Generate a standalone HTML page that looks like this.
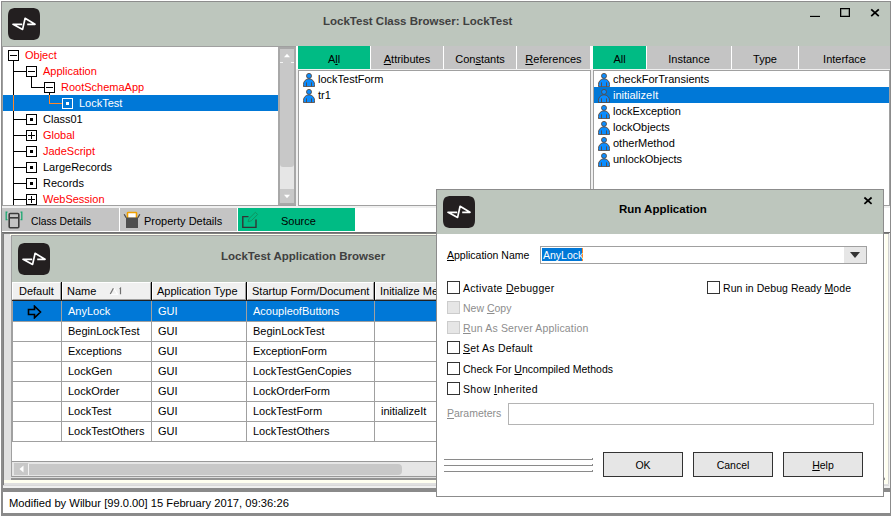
<!DOCTYPE html><html><head><meta charset="utf-8"><style>
html,body{margin:0;padding:0;}
body{width:892px;height:517px;overflow:hidden;background:#fff;position:relative;font-family:"Liberation Sans",sans-serif;font-size:11px;color:#000;}
body div{position:absolute;box-sizing:border-box;}
.t{white-space:pre;}
svg{display:block;}
u{text-decoration:underline;text-underline-offset:1px;text-decoration-thickness:1px;}
</style></head><body>
<div style="left:1px;top:1px;width:890px;height:515px;border:1px solid #8c8c8c;border-left:2px solid #8c8c8c;background:#f0f0f0"></div>
<div style="left:2px;top:2px;width:888px;height:44px;background:#bdc6bd"></div>
<div style="left:8px;top:8px;width:32px;height:32px"><svg width="32" height="32" viewBox="0 0 32 32"><path d="M8.5 0 H23.5 C30 0 32 2 32 8.5 V23.5 C32 30 30 32 23.5 32 H8.5 C2 32 0 30 0 23.5 V8.5 C0 2 2 0 8.5 0Z" fill="#231f20"/><path d="M14.2 16.3 H5 L14.6 21.4 L17.1 10.3 L27 16.3 H19.2" fill="none" stroke="#fff" stroke-width="1.7" stroke-linejoin="round"/></svg></div>
<div class="t" style="left:323px;top:12px;height:18px;line-height:18px;font-weight:bold;font-size:11.5px;color:#404040">LockTest Class Browser: LockTest</div>
<div style="left:810px;top:16px;width:10px;height:1px;background:#000"></div>
<div style="left:810px;top:15px;width:10px;height:1px;background:rgba(0,0,0,0.15)"></div>
<div style="left:840px;top:8px;width:10px;height:9px;border:1px solid #000;box-shadow:inset 0 0 0 0.6px rgba(0,0,0,0.5)"></div>
<div style="left:870px;top:8px;width:10px;height:10px"><svg width="10" height="10" viewBox="0 0 10 10"><path d="M1.2 1.4 L8.8 8.2 M8.8 1.4 L1.2 8.2" stroke="#000" stroke-width="1.8"/></svg></div>
<div style="left:2px;top:46px;width:294px;height:160px;background:#fff;border:1px solid #a0a0a0"></div>
<div style="left:278px;top:47px;width:18px;height:158px;background:#e6e6e6;border:2px solid #a8a8a8;border-left-width:2px"></div>
<div style="left:280px;top:49px;width:14px;height:13px;background:#c8c8c8"></div>
<div style="left:283px;top:53px;width:8px;height:5px"><svg width="8" height="5"><path d="M1 4.2 L4 0.8 L7 4.2Z" fill="#fff"/></svg></div>
<div style="left:280px;top:62px;width:14px;height:105px;background:#c8c8c8;border-radius:0 0 3px 3px"></div>
<div style="left:280px;top:62px;width:3px;height:1px;background:#f4f4f4"></div>
<div style="left:291px;top:62px;width:3px;height:1px;background:#f4f4f4"></div>
<div style="left:280px;top:189px;width:14px;height:14px;background:#c8c8c8"></div>
<div style="left:283px;top:194px;width:8px;height:5px"><svg width="8" height="5"><path d="M1 0.8 L4 4.2 L7 0.8Z" fill="#fff"/></svg></div>
<div style="left:3px;top:47px;width:275px;height:158px;overflow:hidden">
<div style="left:0px;top:48px;width:275px;height:16px;background:#0078d7"></div>
<div style="left:10px;top:14px;width:1px;height:34px;background:#000"></div>
<div style="left:10px;top:48px;width:1px;height:16px;background:#ff8728"></div>
<div style="left:10px;top:64px;width:1px;height:94px;background:#000"></div>
<div style="left:28px;top:30px;width:1px;height:10px;background:#000"></div>
<div style="left:46px;top:46px;width:1px;height:2px;background:#000"></div>
<div style="left:46px;top:48px;width:1px;height:9px;background:#ff8728"></div>
<div style="left:5px;top:3px;width:11px;height:11px;border:1px solid #000;background:#fff"></div>
<div style="left:7px;top:8px;width:7px;height:1px;background:#000"></div>
<div class="t" style="left:22px;top:0px;height:16px;line-height:16px;color:#ff0000">Object</div>
<div style="left:10px;top:24px;width:13px;height:1px;background:#000"></div>
<div style="left:23px;top:19px;width:11px;height:11px;border:1px solid #000;background:#fff"></div>
<div style="left:25px;top:24px;width:7px;height:1px;background:#000"></div>
<div class="t" style="left:40px;top:16px;height:16px;line-height:16px;color:#ff0000">Application</div>
<div style="left:28px;top:40px;width:13px;height:1px;background:#000"></div>
<div style="left:41px;top:35px;width:11px;height:11px;border:1px solid #000;background:#fff"></div>
<div style="left:43px;top:40px;width:7px;height:1px;background:#000"></div>
<div class="t" style="left:58px;top:32px;height:16px;line-height:16px;color:#ff0000">RootSchemaApp</div>
<div style="left:46px;top:56px;width:13px;height:1px;background:#ff8728"></div>
<div style="left:59px;top:51px;width:11px;height:11px;border:1px solid #fff;background:#0078d7"></div>
<div style="left:63px;top:55px;width:3px;height:3px;background:#fff"></div>
<div class="t" style="left:76px;top:48px;height:16px;line-height:16px;color:#fff">LockTest</div>
<div style="left:10px;top:72px;width:13px;height:1px;background:#000"></div>
<div style="left:23px;top:67px;width:11px;height:11px;border:1px solid #000;background:#fff"></div>
<div style="left:27px;top:71px;width:3px;height:3px;background:#000"></div>
<div class="t" style="left:40px;top:64px;height:16px;line-height:16px;color:#000">Class01</div>
<div style="left:10px;top:88px;width:13px;height:1px;background:#000"></div>
<div style="left:23px;top:83px;width:11px;height:11px;border:1px solid #000;background:#fff"></div>
<div style="left:25px;top:88px;width:7px;height:1px;background:#000"></div>
<div style="left:28px;top:85px;width:1px;height:7px;background:#000"></div>
<div class="t" style="left:40px;top:80px;height:16px;line-height:16px;color:#ff0000">Global</div>
<div style="left:10px;top:104px;width:13px;height:1px;background:#000"></div>
<div style="left:23px;top:99px;width:11px;height:11px;border:1px solid #000;background:#fff"></div>
<div style="left:27px;top:103px;width:3px;height:3px;background:#000"></div>
<div class="t" style="left:40px;top:96px;height:16px;line-height:16px;color:#ff0000">JadeScript</div>
<div style="left:10px;top:120px;width:13px;height:1px;background:#000"></div>
<div style="left:23px;top:115px;width:11px;height:11px;border:1px solid #000;background:#fff"></div>
<div style="left:27px;top:119px;width:3px;height:3px;background:#000"></div>
<div class="t" style="left:40px;top:112px;height:16px;line-height:16px;color:#000">LargeRecords</div>
<div style="left:10px;top:136px;width:13px;height:1px;background:#000"></div>
<div style="left:23px;top:131px;width:11px;height:11px;border:1px solid #000;background:#fff"></div>
<div style="left:27px;top:135px;width:3px;height:3px;background:#000"></div>
<div class="t" style="left:40px;top:128px;height:16px;line-height:16px;color:#000">Records</div>
<div style="left:10px;top:152px;width:13px;height:1px;background:#000"></div>
<div style="left:23px;top:147px;width:11px;height:11px;border:1px solid #000;background:#fff"></div>
<div style="left:25px;top:152px;width:7px;height:1px;background:#000"></div>
<div style="left:28px;top:149px;width:1px;height:7px;background:#000"></div>
<div class="t" style="left:40px;top:144px;height:16px;line-height:16px;color:#ff0000">WebSession</div>
</div>
<div style="left:296px;top:46px;width:594px;height:23px;background:#fff"></div>
<div style="left:298px;top:46px;width:72px;height:23px;background:#00bb84"></div>
<div class="t" style="left:298px;top:48px;width:72px;height:23px;line-height:23px;text-align:center">A<u>l</u>l</div>
<div style="left:371px;top:46px;width:72px;height:23px;background:#c4c4c4"></div>
<div class="t" style="left:371px;top:48px;width:72px;height:23px;line-height:23px;text-align:center"><u>A</u>ttributes</div>
<div style="left:444px;top:46px;width:72px;height:23px;background:#c4c4c4"></div>
<div class="t" style="left:444px;top:48px;width:72px;height:23px;line-height:23px;text-align:center">Con<u>s</u>tants</div>
<div style="left:517px;top:46px;width:73px;height:23px;background:#c4c4c4"></div>
<div class="t" style="left:517px;top:48px;width:73px;height:23px;line-height:23px;text-align:center"><u>R</u>eferences</div>
<div style="left:298px;top:70px;width:293px;height:136px;background:#fff;border:1px solid #a0a0a0"></div>
<div style="left:303px;top:72px;width:12px;height:15px"><svg width="12" height="15" viewBox="0 0 12 15"><circle cx="6" cy="3.9" r="2.5" fill="#0a8cff" stroke="#5a4a40" stroke-width="0.9"/><path d="M0.45 14.6 V12.4 A5.55 5.6 0 0 1 11.55 12.4 V14.6 Z" fill="#0a8cff" stroke="#5a4a40" stroke-width="0.9"/><path d="M3.5 10.4 V14.6 M8.5 10.4 V14.6" stroke="#5a4a40" stroke-width="0.9"/></svg></div>
<div class="t" style="left:318px;top:71px;height:16px;line-height:16px;">lockTestForm</div>
<div style="left:303px;top:88px;width:12px;height:15px"><svg width="12" height="15" viewBox="0 0 12 15"><circle cx="6" cy="3.9" r="2.5" fill="#0a8cff" stroke="#5a4a40" stroke-width="0.9"/><path d="M0.45 14.6 V12.4 A5.55 5.6 0 0 1 11.55 12.4 V14.6 Z" fill="#0a8cff" stroke="#5a4a40" stroke-width="0.9"/><path d="M3.5 10.4 V14.6 M8.5 10.4 V14.6" stroke="#5a4a40" stroke-width="0.9"/></svg></div>
<div class="t" style="left:318px;top:87px;height:16px;line-height:16px;">tr1</div>
<div style="left:593px;top:46px;width:53px;height:23px;background:#00bb84"></div>
<div class="t" style="left:593px;top:48px;width:53px;height:23px;line-height:23px;text-align:center">All</div>
<div style="left:647px;top:46px;width:84px;height:23px;background:#c4c4c4"></div>
<div class="t" style="left:647px;top:48px;width:84px;height:23px;line-height:23px;text-align:center">Instance</div>
<div style="left:732px;top:46px;width:66px;height:23px;background:#c4c4c4"></div>
<div class="t" style="left:732px;top:48px;width:66px;height:23px;line-height:23px;text-align:center">Type</div>
<div style="left:799px;top:46px;width:91px;height:23px;background:#c4c4c4"></div>
<div class="t" style="left:799px;top:48px;width:91px;height:23px;line-height:23px;text-align:center">Interface</div>
<div style="left:593px;top:70px;width:297px;height:136px;background:#fff;border:1px solid #a0a0a0"></div>
<div style="left:594px;top:87px;width:295px;height:16px;background:#0078d7"></div>
<div style="left:598px;top:72px;width:12px;height:15px"><svg width="12" height="15" viewBox="0 0 12 15"><circle cx="6" cy="3.9" r="2.5" fill="#0a8cff" stroke="#5a4a40" stroke-width="0.9"/><path d="M0.45 14.6 V12.4 A5.55 5.6 0 0 1 11.55 12.4 V14.6 Z" fill="#0a8cff" stroke="#5a4a40" stroke-width="0.9"/><path d="M3.5 10.4 V14.6 M8.5 10.4 V14.6" stroke="#5a4a40" stroke-width="0.9"/></svg></div>
<div class="t" style="left:613px;top:71px;height:16px;line-height:16px;">checkForTransients</div>
<div style="left:598px;top:88px;width:12px;height:15px"><svg width="12" height="15" viewBox="0 0 12 15"><circle cx="6" cy="3.9" r="2.5" fill="#0a8cff" stroke="#5a4a40" stroke-width="0.9"/><path d="M0.45 14.6 V12.4 A5.55 5.6 0 0 1 11.55 12.4 V14.6 Z" fill="#0a8cff" stroke="#5a4a40" stroke-width="0.9"/><path d="M3.5 10.4 V14.6 M8.5 10.4 V14.6" stroke="#5a4a40" stroke-width="0.9"/></svg></div>
<div class="t" style="left:613px;top:87px;height:16px;line-height:16px;color:#fff">initializeIt</div>
<div style="left:598px;top:104px;width:12px;height:15px"><svg width="12" height="15" viewBox="0 0 12 15"><circle cx="6" cy="3.9" r="2.5" fill="#0a8cff" stroke="#5a4a40" stroke-width="0.9"/><path d="M0.45 14.6 V12.4 A5.55 5.6 0 0 1 11.55 12.4 V14.6 Z" fill="#0a8cff" stroke="#5a4a40" stroke-width="0.9"/><path d="M3.5 10.4 V14.6 M8.5 10.4 V14.6" stroke="#5a4a40" stroke-width="0.9"/></svg></div>
<div class="t" style="left:613px;top:103px;height:16px;line-height:16px;">lockException</div>
<div style="left:598px;top:120px;width:12px;height:15px"><svg width="12" height="15" viewBox="0 0 12 15"><circle cx="6" cy="3.9" r="2.5" fill="#0a8cff" stroke="#5a4a40" stroke-width="0.9"/><path d="M0.45 14.6 V12.4 A5.55 5.6 0 0 1 11.55 12.4 V14.6 Z" fill="#0a8cff" stroke="#5a4a40" stroke-width="0.9"/><path d="M3.5 10.4 V14.6 M8.5 10.4 V14.6" stroke="#5a4a40" stroke-width="0.9"/></svg></div>
<div class="t" style="left:613px;top:119px;height:16px;line-height:16px;">lockObjects</div>
<div style="left:598px;top:136px;width:12px;height:15px"><svg width="12" height="15" viewBox="0 0 12 15"><circle cx="6" cy="3.9" r="2.5" fill="#0a8cff" stroke="#5a4a40" stroke-width="0.9"/><path d="M0.45 14.6 V12.4 A5.55 5.6 0 0 1 11.55 12.4 V14.6 Z" fill="#0a8cff" stroke="#5a4a40" stroke-width="0.9"/><path d="M3.5 10.4 V14.6 M8.5 10.4 V14.6" stroke="#5a4a40" stroke-width="0.9"/></svg></div>
<div class="t" style="left:613px;top:135px;height:16px;line-height:16px;">otherMethod</div>
<div style="left:598px;top:152px;width:12px;height:15px"><svg width="12" height="15" viewBox="0 0 12 15"><circle cx="6" cy="3.9" r="2.5" fill="#0a8cff" stroke="#5a4a40" stroke-width="0.9"/><path d="M0.45 14.6 V12.4 A5.55 5.6 0 0 1 11.55 12.4 V14.6 Z" fill="#0a8cff" stroke="#5a4a40" stroke-width="0.9"/><path d="M3.5 10.4 V14.6 M8.5 10.4 V14.6" stroke="#5a4a40" stroke-width="0.9"/></svg></div>
<div class="t" style="left:613px;top:151px;height:16px;line-height:16px;">unlockObjects</div>
<div style="left:2px;top:206px;width:888px;height:2px;background:#f0f0f0"></div>
<div style="left:2px;top:208px;width:353px;height:23px;background:#c4c4c4"></div>
<div style="left:355px;top:208px;width:535px;height:23px;background:#fff"></div>
<div style="left:119px;top:208px;width:1px;height:23px;background:#fff"></div>
<div style="left:237px;top:208px;width:1px;height:23px;background:#fff"></div>
<div style="left:238px;top:208px;width:117px;height:23px;background:#00bb84"></div>
<div class="t" style="left:31px;top:210px;height:23px;line-height:23px;font-size:10.3px">Class Details</div>
<div class="t" style="left:144px;top:210px;height:23px;line-height:23px;">Property Details</div>
<div class="t" style="left:281px;top:210px;height:23px;line-height:23px;">Source</div>
<div style="left:5px;top:211px;width:19px;height:18px"><svg width="19" height="18" viewBox="0 0 19 18"><path d="M2.5 1.2 H1.2 V8.6 H2.5 M15.5 1.2 H16.8 V8.6 H15.5" fill="none" stroke="#1aa870" stroke-width="1.3"/><rect x="4.2" y="2.5" width="9.6" height="14.2" rx="1" fill="none" stroke="#3c3c3c" stroke-width="1.6"/><path d="M4.2 6.8 H13.8" stroke="#3c3c3c" stroke-width="1.6"/></svg></div>
<div style="left:123px;top:211px;width:19px;height:18px"><svg width="19" height="18" viewBox="0 0 19 18"><rect x="4.5" y="1.5" width="9" height="6" fill="#fff" stroke="#f0a000" stroke-width="1.6" rx="0.6"/><rect x="3" y="6.5" width="12" height="10.5" fill="#4f4f4f"/><path d="M1.2 3.2 L3.2 6.8 M16.8 3.2 L14.8 6.8" stroke="#4f4f4f" stroke-width="1.3"/></svg></div>
<div style="left:240px;top:211px;width:19px;height:18px"><svg width="19" height="18" viewBox="0 0 19 18"><path d="M8.5 5.6 H2.8 V16.4 H16 V8.5" fill="none" stroke="#333" stroke-width="1.4"/><path d="M8 10.8 L9 7.6 L15.4 1.3 L17.6 3.5 L11.2 9.8 Z" fill="none" stroke="#10935f" stroke-width="1"/></svg></div>
<div style="left:2px;top:231px;width:888px;height:1px;background:#fff"></div>
<div style="left:2px;top:232px;width:888px;height:1px;background:#6e6e6e"></div>
<div style="left:3px;top:233px;width:886px;height:252px;background:#e0e0e0;border-top:1px solid #808080;border-left:1px solid #808080"></div>
<div style="left:10px;top:234px;width:876px;height:2px;background:#fffff0"></div>
<div style="left:11px;top:235px;width:873px;height:246px;background:#fff;border-top:1px solid #a0a0a0;border-left:1px solid #a0a0a0"></div>
<div style="left:12px;top:236px;width:872px;height:46px;background:#bdc6bd"></div>
<div style="left:884px;top:234px;width:5px;height:250px;background:#fffff0;border-left:1px solid #fff;border-right:1px solid #d0d0d0"></div>
<div style="left:18px;top:243px;width:32px;height:32px"><svg width="32" height="32" viewBox="0 0 32 32"><path d="M8.5 0 H23.5 C30 0 32 2 32 8.5 V23.5 C32 30 30 32 23.5 32 H8.5 C2 32 0 30 0 23.5 V8.5 C0 2 2 0 8.5 0Z" fill="#231f20"/><path d="M14.2 16.3 H5 L14.6 21.4 L17.1 10.3 L27 16.3 H19.2" fill="none" stroke="#fff" stroke-width="1.7" stroke-linejoin="round"/></svg></div>
<div class="t" style="left:221px;top:247px;height:18px;line-height:18px;font-weight:bold;font-size:11.5px;color:#404040">LockTest Application Browser</div>
<div style="left:12px;top:282px;width:49px;height:18px;background:#f0f0f0;border-top:1px solid #fff;border-left:1px solid #fff;border-right:1px solid #a0a0a0;border-bottom:1px solid #a0a0a0"></div>
<div style="left:61px;top:282px;width:1px;height:19px;background:#000"></div>
<div class="t" style="left:19px;top:282px;height:18px;line-height:18px;">Default</div>
<div style="left:62px;top:282px;width:89px;height:18px;background:#f0f0f0;border-top:1px solid #fff;border-left:1px solid #fff;border-right:1px solid #a0a0a0;border-bottom:1px solid #a0a0a0"></div>
<div style="left:151px;top:282px;width:1px;height:19px;background:#000"></div>
<div class="t" style="left:67px;top:282px;height:18px;line-height:18px;">Name</div>
<div style="left:152px;top:282px;width:94px;height:18px;background:#f0f0f0;border-top:1px solid #fff;border-left:1px solid #fff;border-right:1px solid #a0a0a0;border-bottom:1px solid #a0a0a0"></div>
<div style="left:246px;top:282px;width:1px;height:19px;background:#000"></div>
<div class="t" style="left:157px;top:282px;height:18px;line-height:18px;">Application Type</div>
<div style="left:247px;top:282px;width:127px;height:18px;background:#f0f0f0;border-top:1px solid #fff;border-left:1px solid #fff;border-right:1px solid #a0a0a0;border-bottom:1px solid #a0a0a0"></div>
<div style="left:374px;top:282px;width:1px;height:19px;background:#000"></div>
<div class="t" style="left:252px;top:282px;height:18px;line-height:18px;">Startup Form/Document</div>
<div style="left:375px;top:282px;width:199px;height:18px;background:#f0f0f0;border-top:1px solid #fff;border-left:1px solid #fff;border-right:1px solid #a0a0a0;border-bottom:1px solid #a0a0a0"></div>
<div style="left:574px;top:282px;width:1px;height:19px;background:#000"></div>
<div class="t" style="left:380px;top:282px;height:18px;line-height:18px;">Initialize Method</div>
<div style="left:575px;top:282px;width:308px;height:18px;background:#f0f0f0;border-top:1px solid #fff;border-left:1px solid #fff;border-right:1px solid #a0a0a0;border-bottom:1px solid #a0a0a0"></div>
<div style="left:883px;top:282px;width:1px;height:19px;background:#000"></div>
<div style="left:12px;top:300px;width:872px;height:1px;background:#202020"></div>
<div style="left:108px;top:286px;width:16px;height:10px"><svg width="16" height="10" viewBox="0 0 16 10"><path d="M5.5 2 L9.6 8.3 L2.2 8.3" fill="none" stroke="#fff" stroke-width="1.1"/><path d="M2.3 8 L5.4 2.2" stroke="#707070" stroke-width="1.2"/><path d="M11.6 3.2 L12.5 2.2 V8.3" fill="none" stroke="#707070" stroke-width="1.2"/></svg></div>
<div style="left:12px;top:301px;width:1px;height:140px;background:#a0a0a0"></div>
<div style="left:13px;top:301px;width:871px;height:20px;background:#0078d7"></div>
<div style="left:12px;top:321px;width:872px;height:1px;background:#a0a0a0"></div>
<div class="t" style="left:68px;top:302px;height:18px;line-height:18px;color:#fff">AnyLock</div>
<div class="t" style="left:158px;top:302px;height:18px;line-height:18px;color:#fff">GUI</div>
<div class="t" style="left:253px;top:302px;height:18px;line-height:18px;color:#fff">AcoupleofButtons</div>
<div class="t" style="left:381px;top:302px;height:18px;line-height:18px;color:#fff"></div>
<div style="left:12px;top:341px;width:872px;height:1px;background:#a0a0a0"></div>
<div class="t" style="left:68px;top:322px;height:18px;line-height:18px;color:#000">BeginLockTest</div>
<div class="t" style="left:158px;top:322px;height:18px;line-height:18px;color:#000">GUI</div>
<div class="t" style="left:253px;top:322px;height:18px;line-height:18px;color:#000">BeginLockTest</div>
<div class="t" style="left:381px;top:322px;height:18px;line-height:18px;color:#000"></div>
<div style="left:12px;top:361px;width:872px;height:1px;background:#a0a0a0"></div>
<div class="t" style="left:68px;top:342px;height:18px;line-height:18px;color:#000">Exceptions</div>
<div class="t" style="left:158px;top:342px;height:18px;line-height:18px;color:#000">GUI</div>
<div class="t" style="left:253px;top:342px;height:18px;line-height:18px;color:#000">ExceptionForm</div>
<div class="t" style="left:381px;top:342px;height:18px;line-height:18px;color:#000"></div>
<div style="left:12px;top:381px;width:872px;height:1px;background:#a0a0a0"></div>
<div class="t" style="left:68px;top:362px;height:18px;line-height:18px;color:#000">LockGen</div>
<div class="t" style="left:158px;top:362px;height:18px;line-height:18px;color:#000">GUI</div>
<div class="t" style="left:253px;top:362px;height:18px;line-height:18px;color:#000">LockTestGenCopies</div>
<div class="t" style="left:381px;top:362px;height:18px;line-height:18px;color:#000"></div>
<div style="left:12px;top:401px;width:872px;height:1px;background:#a0a0a0"></div>
<div class="t" style="left:68px;top:382px;height:18px;line-height:18px;color:#000">LockOrder</div>
<div class="t" style="left:158px;top:382px;height:18px;line-height:18px;color:#000">GUI</div>
<div class="t" style="left:253px;top:382px;height:18px;line-height:18px;color:#000">LockOrderForm</div>
<div class="t" style="left:381px;top:382px;height:18px;line-height:18px;color:#000"></div>
<div style="left:12px;top:421px;width:872px;height:1px;background:#a0a0a0"></div>
<div class="t" style="left:68px;top:402px;height:18px;line-height:18px;color:#000">LockTest</div>
<div class="t" style="left:158px;top:402px;height:18px;line-height:18px;color:#000">GUI</div>
<div class="t" style="left:253px;top:402px;height:18px;line-height:18px;color:#000">LockTestForm</div>
<div class="t" style="left:381px;top:402px;height:18px;line-height:18px;color:#000">initializeIt</div>
<div style="left:12px;top:441px;width:872px;height:1px;background:#a0a0a0"></div>
<div class="t" style="left:68px;top:422px;height:18px;line-height:18px;color:#000">LockTestOthers</div>
<div class="t" style="left:158px;top:422px;height:18px;line-height:18px;color:#000">GUI</div>
<div class="t" style="left:253px;top:422px;height:18px;line-height:18px;color:#000">LockTestOthers</div>
<div class="t" style="left:381px;top:422px;height:18px;line-height:18px;color:#000"></div>
<div style="left:61px;top:301px;width:1px;height:140px;background:#a0a0a0"></div>
<div style="left:151px;top:301px;width:1px;height:140px;background:#a0a0a0"></div>
<div style="left:246px;top:301px;width:1px;height:140px;background:#a0a0a0"></div>
<div style="left:374px;top:301px;width:1px;height:140px;background:#a0a0a0"></div>
<div style="left:27px;top:305px;width:15px;height:14px"><svg width="15" height="14" viewBox="0 0 15 14"><path d="M1.5 4.5 H7.5 V1.2 L13.5 7 L7.5 12.8 V9.5 H1.5 Z" fill="none" stroke="#000" stroke-width="1.6"/></svg></div>
<div style="left:12px;top:461px;width:872px;height:16px;background:#e6e6e6;border-top:1px solid #999;border-bottom:1px solid #999"></div>
<div style="left:14px;top:463px;width:14px;height:12px;background:#c8c8c8"></div>
<div style="left:19px;top:465px;width:5px;height:8px"><svg width="5" height="8"><path d="M4.5 0.5 L0.5 4 L4.5 7.5Z" fill="#fff"/></svg></div>
<div style="left:28px;top:464px;width:374px;height:11px;background:#c8c8c8;border-radius:0 4px 4px 0;border-left:1px solid #f4f4f4"></div>
<div style="left:11px;top:477px;width:874px;height:1px;background:#dcdcdc"></div>
<div style="left:11px;top:478px;width:874px;height:2px;background:#939393"></div>
<div style="left:4px;top:480px;width:882px;height:3px;background:#fffff0"></div>
<div style="left:3px;top:485px;width:886px;height:1px;background:#d8d8d8"></div>
<div style="left:2px;top:488px;width:888px;height:4px;background:#8a8a8a"></div>
<div style="left:1px;top:492px;width:889px;height:23px;background:#fff;border-left:2px solid #8a8a8a;border-bottom:2px solid #8a8a8a"></div>
<div class="t" style="left:9px;top:493px;height:20px;line-height:20px;font-size:11.2px">Modified by Wilbur [99.0.00] 15 February 2017, 09:36:26</div>
<div style="left:436px;top:189px;width:448px;height:308px;background:#fff;border:1px solid #8c8c8c"></div>
<div style="left:437px;top:190px;width:446px;height:44px;background:#bdc6bd"></div>
<div style="left:443px;top:196px;width:32px;height:32px"><svg width="32" height="32" viewBox="0 0 32 32"><path d="M8.5 0 H23.5 C30 0 32 2 32 8.5 V23.5 C32 30 30 32 23.5 32 H8.5 C2 32 0 30 0 23.5 V8.5 C0 2 2 0 8.5 0Z" fill="#231f20"/><path d="M14.2 16.3 H5 L14.6 21.4 L17.1 10.3 L27 16.3 H19.2" fill="none" stroke="#fff" stroke-width="1.7" stroke-linejoin="round"/></svg></div>
<div class="t" style="left:619px;top:200px;height:18px;line-height:18px;font-weight:bold;font-size:11.5px;color:#000">Run Application</div>
<div style="left:863px;top:196px;width:10px;height:10px"><svg width="10" height="10" viewBox="0 0 10 10"><path d="M1.4 1.5 L8.6 7.9 M8.6 1.5 L1.4 7.9" stroke="#000" stroke-width="1.7"/></svg></div>
<div class="t" style="left:447px;top:247px;height:16px;line-height:16px;font-size:10.5px"><u>A</u>pplication Name</div>
<div style="left:540px;top:246px;width:327px;height:18px;background:#fff;border:1px solid #a0a0a0"></div>
<div style="left:844px;top:247px;width:22px;height:16px;background:#e6e6e6"></div>
<div style="left:850px;top:252px;width:10px;height:6px"><svg width="10" height="6"><path d="M0 0 H10 L5 6Z" fill="#333"/></svg></div>
<div style="left:542px;top:248px;width:41px;height:13px;background:#0078d7"></div>
<div style="left:582px;top:248px;width:1px;height:13px;background:#ff8728"></div>
<div class="t" style="left:543px;top:247px;height:16px;line-height:16px;font-size:10.5px;color:#fff">AnyLock</div>
<div style="left:447px;top:281px;width:13px;height:13px;background:#fff;border:1px solid #333"></div>
<div class="t" style="left:463px;top:280px;height:16px;line-height:16px;font-size:10.5px;letter-spacing:0.3px">Activate <u>D</u>ebugger</div>
<div style="left:707px;top:281px;width:13px;height:13px;background:#fff;border:1px solid #333"></div>
<div class="t" style="left:723px;top:280px;height:16px;line-height:16px;font-size:10.5px;letter-spacing:0.06px">Run in Debug Ready <u>M</u>ode</div>
<div style="left:447px;top:301px;width:13px;height:13px;background:#e6e6e6;border:1px solid #cccccc"></div>
<div class="t" style="left:463px;top:300px;height:16px;line-height:16px;font-size:10.5px;color:#8d8d8d">New <u>C</u>opy</div>
<div style="left:447px;top:321px;width:13px;height:13px;background:#e6e6e6;border:1px solid #cccccc"></div>
<div class="t" style="left:463px;top:320px;height:16px;line-height:16px;font-size:10.5px;letter-spacing:0.16px;color:#8d8d8d"><u>R</u>un As Server Application</div>
<div style="left:447px;top:341px;width:13px;height:13px;background:#fff;border:1px solid #333"></div>
<div class="t" style="left:463px;top:340px;height:16px;line-height:16px;font-size:10.5px;letter-spacing:0.23px"><u>S</u>et As Default</div>
<div style="left:447px;top:362px;width:13px;height:13px;background:#fff;border:1px solid #333"></div>
<div class="t" style="left:463px;top:361px;height:16px;line-height:16px;font-size:10.5px">Check For <u>U</u>ncompiled Methods</div>
<div style="left:447px;top:382px;width:13px;height:13px;background:#fff;border:1px solid #333"></div>
<div class="t" style="left:463px;top:381px;height:16px;line-height:16px;font-size:10.5px;letter-spacing:0.34px">Show <u>I</u>nherited</div>
<div class="t" style="left:447px;top:405px;height:16px;line-height:16px;font-size:10.5px;color:#8d8d8d"><u>P</u>arameters</div>
<div style="left:508px;top:403px;width:366px;height:22px;background:#fff;border:1px solid #b4b4b4"></div>
<div style="left:444px;top:459px;width:149px;height:1px;background:#8a8a8a"></div>
<div style="left:592px;top:458px;width:1px;height:1px;background:#8a8a8a"></div>
<div style="left:444px;top:465px;width:149px;height:1px;background:#8a8a8a"></div>
<div style="left:592px;top:464px;width:1px;height:1px;background:#8a8a8a"></div>
<div style="left:444px;top:471px;width:149px;height:1px;background:#8a8a8a"></div>
<div style="left:592px;top:470px;width:1px;height:1px;background:#8a8a8a"></div>
<div style="left:603px;top:452px;width:80px;height:25px;background:#e6e6e6;border:1px solid #333"></div>
<div class="t" style="left:603px;top:453px;width:80px;height:25px;line-height:25px;text-align:center;font-size:10.5px">OK</div>
<div style="left:693px;top:452px;width:80px;height:25px;background:#e6e6e6;border:1px solid #333"></div>
<div class="t" style="left:693px;top:453px;width:80px;height:25px;line-height:25px;text-align:center;font-size:10.5px">Cancel</div>
<div style="left:783px;top:452px;width:80px;height:25px;background:#e6e6e6;border:1px solid #333"></div>
<div class="t" style="left:783px;top:453px;width:80px;height:25px;line-height:25px;text-align:center;font-size:10.5px"><u>H</u>elp</div>
</body></html>
